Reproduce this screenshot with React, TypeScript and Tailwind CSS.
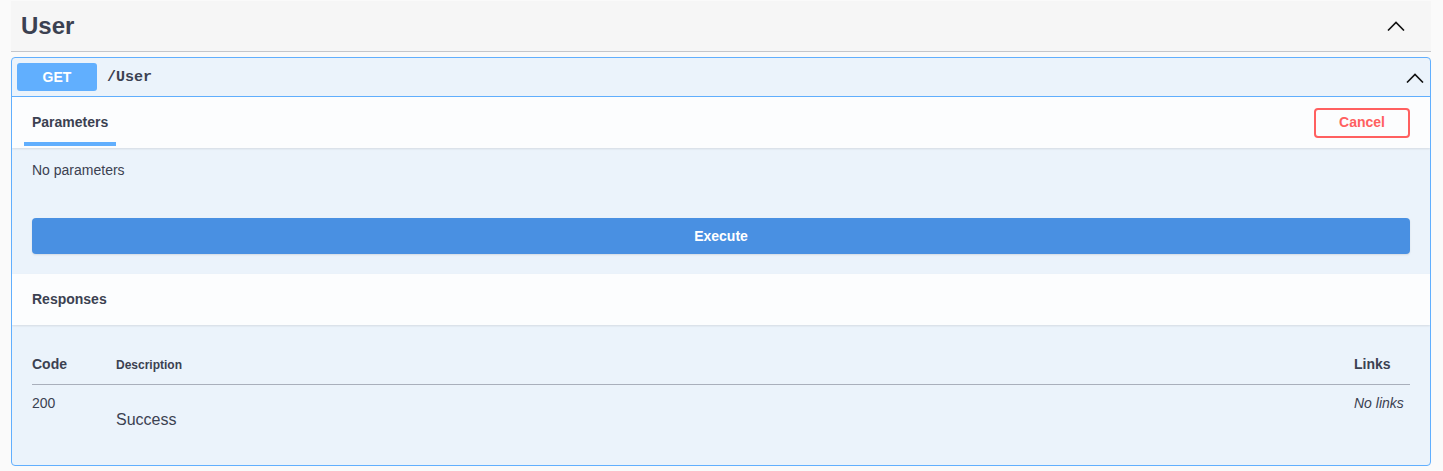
import React from "react";

const Chevron = ({ className }: { className?: string }) => (
  <svg className={className} viewBox="0 0 18 10" fill="none" stroke="#111" strokeWidth="1.6">
    <polyline points="1,9.5 9,1.5 17,9.5" />
  </svg>
);

export default function App() {
  return (
    <div
      className="min-h-[471px] bg-[#fafafa] pl-[11px] pr-[12px] pt-[1px] text-[#3b4151]"
      style={{ fontFamily: '"Liberation Sans", Arial, sans-serif' }}
    >
      {/* Tag header */}
      <div className="flex h-[51px] items-center justify-between border-b border-[#c4c6cb] bg-[#f6f6f6] pl-[10px] pr-[26px]">
        <h3 className="text-[24px] font-bold leading-none text-[#3b4151]">User</h3>
        <Chevron className="h-[10px] w-[18px]" />
      </div>

      {/* Opblock */}
      <div className="mt-[5px] overflow-hidden rounded-[4px] border border-[#61affe] bg-[#ebf3fb]">
        {/* Summary */}
        <div className="flex h-[39px] items-center border-b border-[#61affe] pl-[5px] pr-[6px]">
          <div className="flex h-[28px] w-[80px] items-center justify-center rounded-[3px] bg-[#61affe] text-[14px] font-bold text-white">
            GET
          </div>
          <span
            className="ml-[10px] mt-[3px] text-[15px] font-bold text-[#3b4151]"
            style={{ fontFamily: '"Liberation Mono", "DejaVu Sans Mono", monospace' }}
          >
            /User
          </span>
          <div className="flex-1" />
          <Chevron className="mt-[2px] h-[10px] w-[18px]" />
        </div>

        {/* Parameters tab header */}
        <div className="flex h-[51px] items-center justify-between bg-[#fcfdfe] pl-[12px] pr-[20px] shadow-[0_1px_2px_rgba(0,0,0,0.1)]">
          <div className="relative flex h-full items-center px-[8px]">
            <span className="text-[14px] font-bold text-[#3b4151]">Parameters</span>
            <div className="absolute bottom-[2px] left-0 right-0 h-[4px] bg-[#61affe]" />
          </div>
          <button className="flex h-[30px] w-[96px] items-center justify-center rounded-[4px] border-2 border-[#ff6060] bg-transparent text-[14px] font-bold text-[#ff6060]">
            Cancel
          </button>
        </div>

        {/* Params body */}
        <div className="px-[20px] pt-[14px]">
          <div className="text-[14px] leading-[16px] text-[#3b4151]">No parameters</div>
          <button className="mb-[20px] mt-[40px] flex h-[36px] w-full items-center justify-center rounded-[4px] bg-[#4990e2] text-[14px] font-bold text-white shadow-[0_1px_2px_rgba(0,0,0,0.1)]">
            Execute
          </button>
        </div>

        {/* Responses header */}
        <div className="flex h-[51px] items-center bg-[#fcfdfe] px-[20px] shadow-[0_1px_2px_rgba(0,0,0,0.1)]">
          <span className="text-[14px] font-bold text-[#3b4151]">Responses</span>
        </div>

        {/* Responses table */}
        <div className="px-[20px] pb-[33px] pt-[29px]">
          <div className="flex items-center border-b border-[#a9afbb] pb-[9px]">
            <div className="w-[84px] text-[14px] font-bold">Code</div>
            <div className="flex-1 text-[12px] font-bold">Description</div>
            <div className="w-[56px] text-[14px] font-bold">Links</div>
          </div>
          <div className="flex pt-[8px]">
            <div className="w-[84px] text-[14px]">200</div>
            <div className="flex-1 pt-[15px] text-[16px]">Success</div>
            <div className="w-[56px] text-[14px] italic">No links</div>
          </div>
        </div>
      </div>
    </div>
  );
}
